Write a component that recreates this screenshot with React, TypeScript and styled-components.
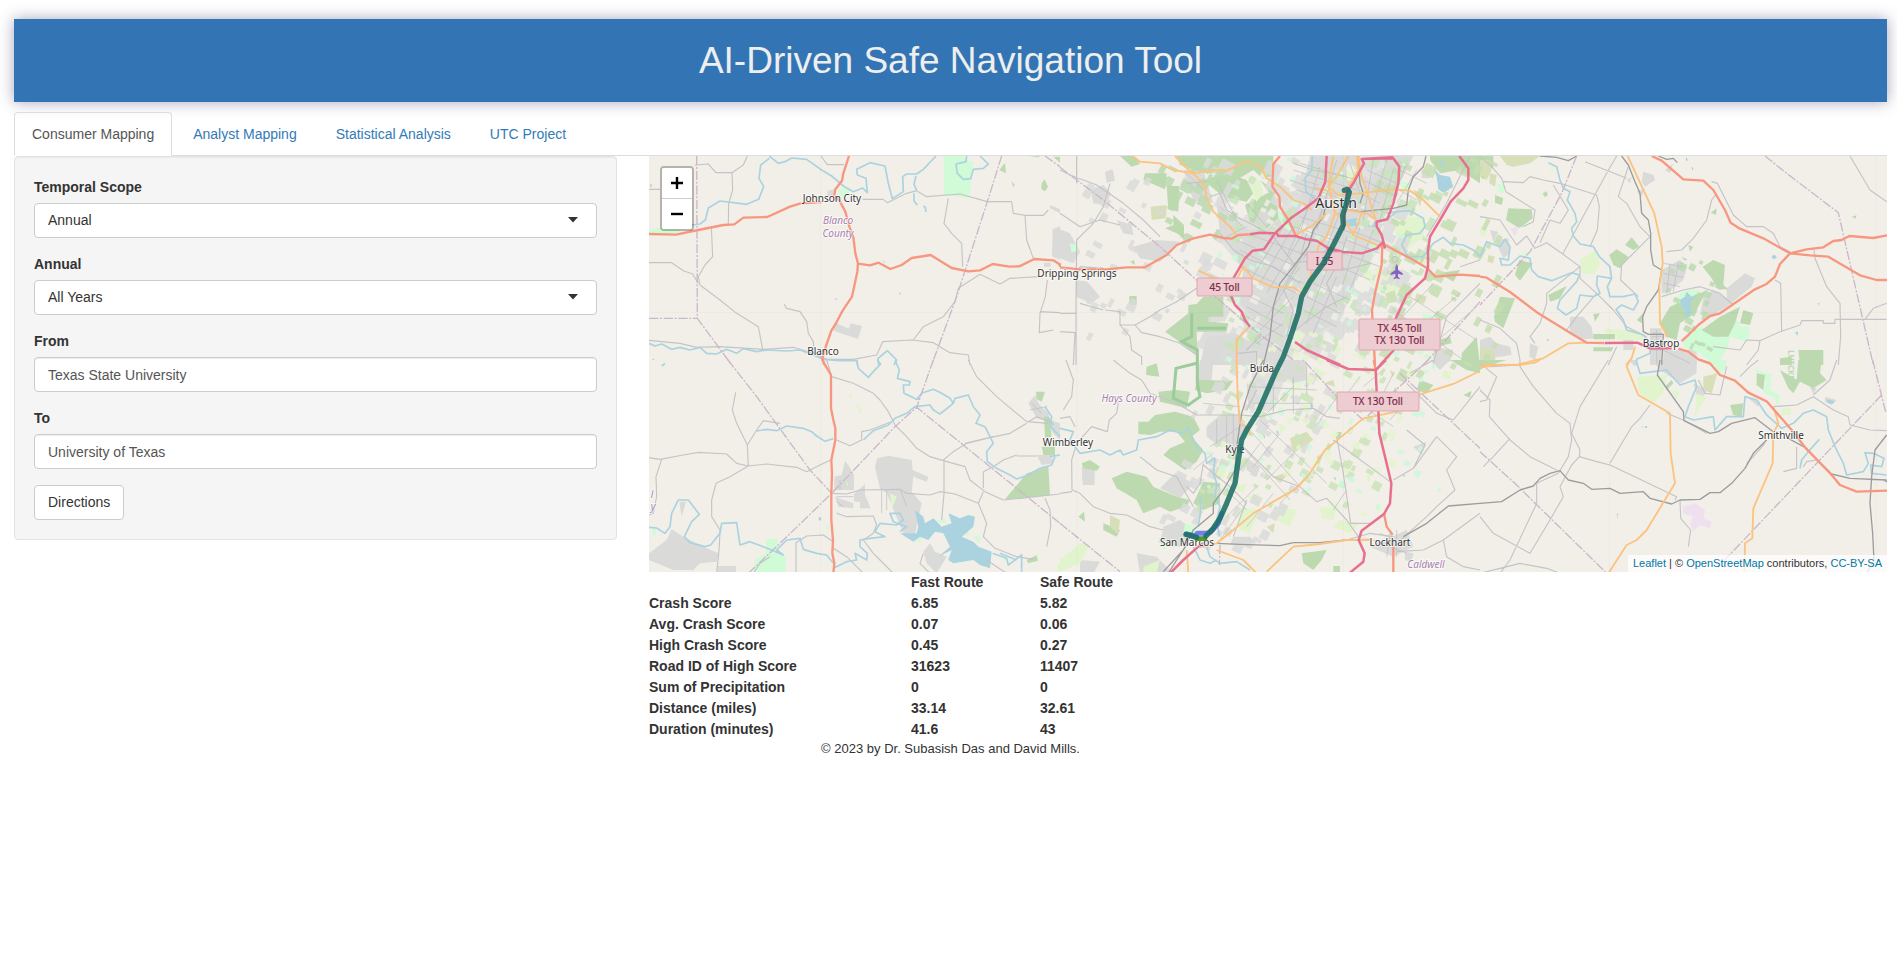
import React from "react";
import styled, { createGlobalStyle } from "styled-components";

const GlobalStyle = createGlobalStyle`
  *, *::before, *::after { box-sizing: border-box; }
  body {
    margin: 0;
    background: #fff;
    color: #333;
    font-family: "Liberation Sans", Arial, sans-serif;
    font-size: 14px;
    line-height: 21px;
  }
  a { color: #337ab7; text-decoration: none; }
`;

const Page = styled.div`
  padding: 19px 10px 0 14px;
`;

const Banner = styled.header`
  display: flex;
  align-items: center;
  justify-content: center;
  height: 83px;
  background: #3375b4;
  box-shadow: 0 0 14px rgba(60, 50, 100, 0.45);
`;

const Title = styled.h1`
  margin: 0;
  color: #eee;
  font-size: 37px;
  font-weight: 400;
  line-height: 40px;
`;

const Tabs = styled.nav`
  display: flex;
  gap: 3px;
  margin-top: 10px;
  border-bottom: 1px solid #ddd;
`;

const Tab = styled.a<{ $active?: boolean }>`
  margin-bottom: -1px;
  padding: 11px 17px 10px;
  border: 1px solid ${(p) => (p.$active ? "#ddd" : "transparent")};
  border-bottom-color: ${(p) => (p.$active ? "#fff" : "transparent")};
  border-radius: 4px 4px 0 0;
  color: ${(p) => (p.$active ? "#555" : "#337ab7")};
`;

const Columns = styled.main`
  display: grid;
  grid-template-columns: 1fr 2fr;
  align-items: start;
  margin: 0 -16px;
`;

const Column = styled.div`
  min-width: 0;
  padding: 0 16px;
`;

const Well = styled.form`
  display: flex;
  flex-direction: column;
  gap: 16px;
  padding: 20px 19px 19px;
  border: 1px solid #e3e3e3;
  border-radius: 4px;
  background: #f5f5f5;
  box-shadow: inset 0 1px 1px rgba(0, 0, 0, 0.05);
`;

const Field = styled.div`
  display: flex;
  flex-direction: column;
  gap: 5px;
`;

const Label = styled.label`
  font-weight: 700;
`;

const controlStyle = `
  width: 100%;
  height: 35px;
  padding: 0 13px;
  border: 1px solid #ccc;
  border-radius: 4px;
  background: #fff;
  font: inherit;
`;

const TextInput = styled.input`
  ${controlStyle}
  color: #555;
  box-shadow: inset 0 1px 1px rgba(0, 0, 0, 0.075);
`;

const SelectBox = styled.div`
  position: relative;
`;

const Select = styled.select`
  ${controlStyle}
  display: block;
  appearance: none;
  color: #333;
`;

const Caret = styled.svg`
  position: absolute;
  top: 14px;
  right: 19px;
  pointer-events: none;
`;

const DirectionsButton = styled.button`
  align-self: flex-start;
  height: 35px;
  padding: 0 13px;
  border: 1px solid #ccc;
  border-radius: 4px;
  background: #fff;
  color: #333;
  font: inherit;
`;

const MapFrame = styled.section`
  position: relative;
  height: 416px;
  overflow: hidden;
  background: #f2efe9;
`;

const MapDrawing = styled.svg`
  display: block;
  width: 100%;
  height: 100%;
  font-family: "Noto Sans", sans-serif;
`;

const ZoomBar = styled.div`
  position: absolute;
  top: 10px;
  left: 11px;
  border: 2px solid rgba(0, 0, 0, 0.25);
  border-radius: 4px;
  background-clip: padding-box;
`;

const ZoomButton = styled.button`
  display: grid;
  place-items: center;
  width: 30px;
  height: 30px;
  padding: 0;
  border: 0;
  background: #fff;
  &:first-child {
    height: 31px;
    border-bottom: 1px solid #ccc;
    border-radius: 2px 2px 0 0;
  }
  &:last-child {
    border-radius: 0 0 2px 2px;
  }
`;

const Attribution = styled.div`
  position: absolute;
  right: 0;
  bottom: 0;
  padding: 0 5px;
  background: rgba(255, 255, 255, 0.75);
  font-size: 11px;
  line-height: 17px;
  a { color: #0078a8; }
`;

const ScoreTable = styled.table`
  border-collapse: collapse;
  table-layout: fixed;
  font-weight: 700;
  th, td {
    width: 129px;
    padding: 0;
    text-align: left;
  }
  th:first-child, td:first-child { width: 262px; }
`;

const Footer = styled.footer`
  margin-top: -2px;
  text-align: center;
  font-size: 13px;
`;

/* ---------- map data, one group per map tile, in thirds of a pixel ---------- */

type Kind =
  | "gray" | "wood" | "park" | "olive" | "pale" | "lake" | "pink"
  | "minor" | "street" | "river" | "rail" | "bound" | "primary" | "trunk" | "motor";

const fills: Partial<Record<Kind, string>> = {
  gray: "#dadad9", wood: "#bcd9b0", park: "#d1fad6", olive: "#d6dfb8",
  pale: "#e2f4cd", lake: "#aad3df", pink: "#eee0ee",
};

const lines: Partial<Record<Kind, [string, number]>> = {
  minor: ["#c4c4c7", 3.4], street: ["#bfbfc3", 2.2], river: ["#aad3df", 5],
  rail: ["#9c9c9c", 4], bound: ["#cbb7cb", 4], primary: ["#fbc37e", 5.5],
  trunk: ["#f8977f", 7], motor: ["#e8708f", 7.5],
};

const order: Kind[] = [
  "gray", "park", "wood", "olive", "pale", "pink", "lake", "street", "minor",
  "river", "bound", "rail", "primary", "trunk", "motor",
];

type Tile = { x: number; y: number; paths: Partial<Record<Kind, string>> };

const tiles: Tile[] = [
  {
    x: 0, y: 0,
    paths: {
      park: "M911 18H975L985 34 1001 36 986 145 912 135ZM595 120L625 110 630 135 600 138Z M27 240L60 232 130 240 100 252 27 252Z",
      wood: "M1078 60L1095 38 1098 70ZM1205 100L1214 88 1224 110 1215 124 1204 118ZM1168 18H1200L1195 22ZM1240 20H1260V38ZM1114 94L1124 104 1120 112ZM28 104L36 102 34 114Z",
      gray: "M1238 238L1260 228V330L1236 318ZM583 516L626 536 632 520 666 528 654 567 580 542ZM1230 165L1260 178V190L1230 175ZM1212 338H1232V350H1212ZM562 122L585 118 580 140 562 138Z",
      lake: "M1164 282l5 4-3 5zM584 444l8 2-4 4zM777 430l6-4-3 10zM726 330l6 4 4 8z",
      river: "M388 18L415 40 435 35 455 24 500 28 545 60 575 78 610 108 640 125 668 114 682 128 678 85 652 75 650 58 690 38 735 48 745 100 757 146 790 125 788 80 800 72 830 72 850 58 888 18 M388 25L362 45 357 85 371 110 356 148 320 163 280 158 240 153 205 174 196 210 180 222 155 225 M828 78l-6 25 8 18M822 130l0 22 10 14M850 168l6 4 2 14 M980 18L978 35 948 42 952 70 970 88 992 86 1000 58 1030 55 1045 42 1020 18 M27 580L45 588 65 582 95 598 120 592 150 600 180 592 200 610 230 612 260 598 290 610 310 596 350 605 380 600 440 603 480 600 520 615 550 628 600 632 650 632 652 645 M716 645L714 625 730 612 742 602 770 630 762 645 M75 640l-10 8",
      minor: "M165 45L205 42 228 68 276 68 310 45 322 18M276 68L278 120 266 160 265 222M27 118L60 118 M214 232L218 320 195 345 175 380 180 405 240 450 290 490 355 530 368 598M27 338L95 338 130 362 158 372 175 400M543 18L562 44 612 44 M668 148L730 148 742 158 800 130 830 122 860 140 960 132 1042 155 1115 155 1120 190 1155 196 1210 196 1225 180M925 145L912 220 935 250 965 280 968 350M1155 196L1160 270 1180 325M1020 373L1080 402 1110 385 1200 380M1020 373L955 415 945 455 910 500 850 530 820 570M1222 390L1216 440 1200 490 1198 548 1240 540M1200 485L1260 488M27 571L120 580 170 592 240 590 370 598 460 592 520 610 560 628 640 628 710 615 728 575 815 570 880 578 930 608 985 615 990 645M432 462L440 475 480 485 500 515 505 550 520 575 522 600",
      bound: "M170 18L172 505 275 645M27 505H172M1085 18L1042 155 950 440 875 645M1215 18L1260 50",
      trunk: "M627 18L610 70 606 92 586 118 583 135 600 155 616 185 628 230 640 262 646 310 654 340 652 365 636 440 606 485 588 520 574 542 558 588 547 625 553 645M27 252L108 254 160 243 250 225 283 223 310 203 382 201 450 170 482 160 545 156M654 341L690 346 716 338 751 357 785 345 815 324 872 315 935 354 985 364 1020 361 1058 342 1108 350 1138 349 1183 327 1240 331 1262 345",
    },
  },
  {
    x: 1260, y: 0,
    paths: {
      gray: "M0 238L30 250 60 305 40 340 0 325ZM92 118L130 105 152 128 140 165 100 160ZM48 390L82 395 120 440 95 460 48 440ZM135 65L158 58 165 92 140 98ZM170 210L215 225 220 255 190 250ZM220 290L290 270 360 275 300 335 240 325ZM370 60L430 60 460 160 400 150ZM350 18H420L410 40ZM440 560L530 550 590 590 590 645H420ZM470 160L560 240 620 240 720 150 750 18H900L900 120 1000 18H1060L1010 120 960 200 960 300 900 330 880 420 830 520 750 560 700 500 650 645H560L590 520 540 460 550 360 520 300 480 250ZM1085 60H1110V85H1085ZM1040 540L1075 510 1100 560 1060 590ZM1120 590L1180 600 1170 635 1120 630Z",
      wood: "M255 70L320 70 315 118 250 90ZM320 108L358 108 355 185 325 178ZM340 195L372 225 372 265 350 250 315 235 340 225ZM180 18L220 18 240 42 215 50ZM350 18H640L640 75 610 88 580 60 530 90 480 70 440 70 400 60 360 45ZM430 90L500 70 560 90 580 130 560 155 490 140ZM555 165L630 125 650 150 655 205 620 235 570 215ZM600 90L655 130 640 145ZM1110 18H1260V100L1200 60 1140 70 1110 30ZM1135 370L1200 360 1180 395ZM1205 610L1250 560 1260 645H1205ZM575 530L605 535 600 600 575 590ZM208 438H230V464H208ZM210 335L222 330 225 345ZM1128 572L1170 560 1175 580 1130 590Z",
      olive: "M272 170L320 165 318 205 275 210ZM975 430L1005 420 1012 455 985 460ZM1060 120L1090 130 1080 170ZM1140 85L1170 105 1165 125ZM790 570l20 8-4 24-20-10zM1080 515L1110 510 1125 535 1090 545ZM1070 430l30 10-8 22-28-10z",
      pale: "M560 75L600 90 610 130 590 155 575 120ZM1000 200L1095 200 1090 260 1040 300 1000 240ZM900 370L960 350 1000 380 1030 420 960 425ZM780 110L810 118 790 140ZM860 50L900 60 890 100 862 90ZM640 400L700 395 690 430ZM1060 320L1100 330 1095 345Z",
      park: "M640 170L680 210 700 250 670 230ZM500 180L530 200 520 225ZM690 370L720 378 715 400ZM590 430L625 420 620 445ZM820 60L850 65 845 90ZM1010 90L1050 100 1040 130ZM920 520L950 530 942 548ZM780 360L800 366 790 380ZM30 280l20 4 4 20-20 2zM1090 490l30 8-5 14-28-8z",
      lake: "M1120 55L1140 75 1170 80 1180 110 1150 128 1135 118 1130 80ZM1140 30l10 5-4 20zM850 210L890 205 950 215 945 232 900 228 860 228Z",
      river: "M757 18L755 60 735 85 738 125 770 150M945 215L985 205 1010 185 1050 182 1090 205 1095 230 1080 250 1040 255 1025 285 1045 320 1090 320 1120 280 1150 262 1170 280 1210 285 1240 300 1260 320M980 190L1010 185",
      street: "M600 400l100 -170M560 410L670 230M620 430l120 -200M650 440l115 -180M530 270l180 80M540 300l190 100M560 250l190 70M540 350l170 80M700 60l190 60M690 90l190 70M720 40l170 50M720 200l160 50M700 230l150 50M760 140l-80 180M800 140L730 330M780 50L720 250M830 30L770 240M860 130L790 320M900 230L850 400M940 240L870 420M870 240l100 40M860 270l100 40M850 310l110 40M840 350l90 40M760 400l110 50M740 440l100 50M730 480l100 50M830 380l-70 170M800 360L740 520M900 130l60 30M920 60l90 40M910 90l100 50M940 30l-30 180M980 30L930 200M1000 60L960 210M760 110l120 40M620 500L720 350M600 540l100 -100M590 580l80 -60M560 470l110 60M560 500l110 60M550 430l120 60M1010 520L1120 400M1050 560L1200 430M1000 480l210 150M1050 440l200 130M1100 600L1250 470M480 170l70 60M500 260l60 -30M470 90l60 120M560 160l60 70M380 70l60 60M710 120l60 20M725 90l50 15M870 40l30 90M1040 40l-60 150M1070 60l-60 100M1020 60l80 40M1000 110l70 40",
      minor: "M0 60L30 75 110 105 190 160 250 210 300 260M50 18V100M150 100L130 170 100 220 50 270 48 460 48 645M0 190L60 230 120 210 180 225M0 490L50 490 M135 480L180 485V525H225L245 548 300 560 360 580 410 615M410 415L350 455 300 480 270 500 225 525M180 525L210 560 215 600 245 620 245 645M60 460L130 480M450 140L480 130 500 180 530 200 580 225 600 235M380 100L440 95 M50 385L60 350 130 355M680 560L760 500 800 470 860 440M0 545L45 548 40 645M1260 400L1160 500 1120 640M1260 330L1200 350M560 600L600 560M1230 18L1160 160 1100 260M530 610L590 605V645M580 225L640 260 700 340 760 330 850 360 930 340M700 40L760 60 860 80M740 250L720 330 670 420 700 480 680 560M860 260L840 330 800 400 830 470M480 250L520 300 570 330 640 350 720 400",
      bound: "M0 52L130 150 300 290 420 400 570 530 700 630M1260 455L1140 590 1090 645",
      rail: "M745 290L700 350 660 400 640 470 630 560 610 645M745 290L760 240 790 200 800 150M1098 18L1090 50 1060 80 1045 120 1040 165 1000 175 900 185 870 180M895 18L900 100 910 130 900 160",
      primary: "M218 18L240 35 300 40 340 60 400 70 435 110 440 145 460 185 510 230 530 255M345 18L375 50 400 70M400 70L460 60 500 62 560 34 600 48 620 85 660 110 700 150 735 162 755 180M865 18L830 80 805 110 835 135 900 130 1000 118 1050 122 1090 150 1140 200M800 120L765 115M895 20L905 80 920 120 940 190 950 215M820 180L860 220 880 255 940 280 975 295M905 190L880 255M860 180L920 190 950 210M825 190L800 260 775 290 740 420 M800 190L760 225 700 260M415 362L520 410 550 350 580 385 640 412 700 412 728 432 740 425M568 530L530 570V645M820 18l-15 90 20 80M890 18L895 60 860 120",
      trunk: "M660 18L640 42 637 110 658 140 660 170 688 215 708 258M0 352L60 358 140 358 200 352 255 352 320 315 350 285 400 265 450 254 490 264 515 266 535 255 570 253M975 285L1060 330 1102 355 1126 380 1200 374 1260 378M967 285L965 345 945 430 936 480 945 645M0 350L-2 340",
      motor: "M800 18L796 95 775 145 740 172 692 205 645 250 612 298 578 302 555 325 520 385M512 435L525 465 545 485 555 510 570 530M570 253L600 248 650 250 655 258 706 258 740 268 770 272 800 292 850 306 905 310 950 295 970 275 965 255 950 230 950 215 982 208 1000 160 1015 100 1018 50 1000 25 905 27 912 40 880 100 862 125M905 27L1000 22M1198 18L1225 55 1225 90 1210 115 1172 155 1140 210 1110 260 1104 300 1104 350 1095 385 1040 435 1005 510M1002 600L960 645M705 576L740 600 840 645M850 306L800 298M970 275L975 295M860 125L850 240",
    },
  },
  {
    x: 2520, y: 0,
    paths: {
      wood: "M85 175L155 178 158 205 118 235 78 210ZM45 135L70 145 65 165 45 158ZM60 440L105 445 70 535 45 515 42 500ZM118 330L158 340 120 392 105 375ZM435 285L455 262 478 290 460 300ZM388 315L410 298 445 320 420 355 400 345ZM668 350L700 330 735 345 730 405 745 418H715L695 385ZM540 520L570 470 640 440 680 420 650 480 630 500 600 520 590 570 560 560ZM665 540L720 500 780 470 765 520 745 560 700 560ZM790 480L820 490 810 525 780 520ZM625 285L640 290 630 305ZM603 320L622 328 615 332ZM340 492L360 490 345 515ZM340 592H400L395 604H340ZM340 552H405V568H340ZM205 435L260 408 240 445 210 455ZM692 188L710 175 708 195ZM955 600H1030V645H960ZM900 625L935 620V645H900ZM1115 200l15 -4 -3 10zM0 18H40V55L0 50ZM188 130l12-6 4 12-10 5zM470 510L490 490 485 520Z",
      olive: "M0 30L30 30 35 60 20 90 0 80ZM25 315L45 320 38 340 22 335ZM60 18H180L150 40 100 50 80 45ZM0 590L40 600 50 645H0ZM30 70L50 75 45 110 28 100Z",
      park: "M610 570L660 530 700 550 740 560 760 520 765 500 785 530 810 530 800 575 750 560 740 600 710 645H700L660 610 610 590ZM580 465L600 430 640 415 660 430 630 520 605 500ZM50 100L72 105 75 130 55 125ZM125 305L145 305 140 325Z",
      pale: "M300 330L345 300 360 340 345 375 305 370ZM0 235L22 245 15 260 0 255ZM640 420L660 420 655 435ZM410 550H490V570H410ZM210 55l12 5-6 8zM375 535l90 8v10l-90-4z",
      gray: "M270 500L310 500 335 530 340 565 300 570 270 545ZM490 65L520 75 525 90 495 110 485 95ZM470 125L495 115 485 140ZM50 270L85 265 90 310 70 325 58 300ZM30 240L55 245 40 275ZM545 360L600 330 622 350 610 390 560 430 545 430ZM555 60l25-20-10 30zM670 440L700 420 740 445 740 415 795 370 825 385 815 410 740 470 700 495 660 495ZM0 570L30 560 50 580 90 590 95 615 30 625 0 600ZM430 540H460V600H430ZM510 535H545V645H510ZM550 600L650 600 650 645H550ZM150 580L175 590 165 630 148 620ZM440 90L455 80 450 100ZM1010 460l10 -2v10z",
      pink: "M90 235L118 230 105 260Z",
      lake: "M600 450L615 440 620 425 635 440 655 430 630 460 635 485 620 505 605 480ZM875 318l10-4 6 10-12 4zM618 20l6 10-6 4zM635 50l6 4-4 8zM198 568l10 0-4 6zM945 548l8-4 2 14z",
      river: "M205 38L230 50 240 90 250 115 270 125 262 150 285 190 290 215 275 235 280 258 300 282 340 290 358 320 390 350 395 385 352 378 350 405 360 430 340 440 300 435 290 475 258 495 232 475 240 450 290 395 298 375 275 368 215 392 175 380 155 360 150 325 120 318 90 345 65 345 60 325 85 330 90 290 75 268 60 290 20 275 0 320M395 385L382 410 390 440 430 440 465 432 475 455 460 480 425 465 408 478 430 510 440 540 490 555 512 580 510 610 470 628 468 645",
      minor: "M0 20L35 50 65 85 78 125 165 180 160 215 128 230M70 95L130 98 150 80 190 90 240 100 350 135 358 170 352 240 330 290M0 200L60 210 110 285 140 258 165 295 200 278 245 310 300 350 300 385 350 430 400 480 440 530 500 560M410 18L380 70 248 312M315 35L440 85M220 105L265 180 240 220 210 210 180 278M445 50L415 140 440 160 480 230 510 260 425 345 422 390 475 440M560 305L605 300 640 265 680 210 695 150 710 130M695 95L712 100 760 195 800 230 850 230 880 250 900 290 930 305M885 390L902 400 905 545M1002 300L1005 325 1040 410 1080 460 1082 560 1075 645M700 590L780 600 800 570 840 572 900 545 960 525 965 512H1030V520H1065V508H1220M1155 508L1180 475 1220 460M545 440L610 420 660 410 720 430 760 465M350 430L290 500 260 540M0 510L60 535 110 580 120 630M1110 18L1170 120 1220 155M385 645L410 590M300 350L200 430 200 460 180 520 150 560 165 580M840 572L835 600 800 645",
      street: "M550 340l60 10M550 370l60 12M550 400l50 10M570 340l-10 90M595 335l-15 90M550 600l80 40M530 540v100M515 560h30M515 550h34M515 580h34M515 600h34",
      rail: "M180 18L230 22 265 32 290 18M425 18L445 45 465 95 480 130 485 190 505 210 512 250 512 300 520 345 545 360 535 420 500 470 488 500 490 545 505 553H550L545 645M535 18L560 28 580 25 592 38",
      bound: "M290 18L245 130 150 305 0 465M855 18L920 70 1075 188 1180 645",
      primary: "M443 18L523 190 545 290 548 340 538 410 540 520 555 545 560 560M0 645H110L160 632 190 625 265 580 320 578M465 590L455 625 438 645",
      trunk: "M515 18L545 32 610 88 670 92 700 120 735 180 752 218 780 236 850 265 930 310 980 298 1030 292 1060 273 1085 270 1108 258 1180 264 1222 256M930 310L990 316 1045 320 1140 376 1190 390 1222 390M930 310L900 342 885 380 860 402 825 418 720 490 690 498 655 525 620 560 605 573M0 380L20 383 90 426 175 490 270 548 320 578 372 579M595 596L625 605 655 628 690 640",
      motor: "M374 579L472 578 510 595 575 595",
    },
  },
  {
    x: 0, y: 630,
    paths: {
      gray: "M705 320L712 295 745 287 815 300 818 330 865 350 860 365 820 350 815 395 845 430 820 545 790 520 740 400 720 385ZM583 350L605 345 615 303 628 320 642 345V390H583ZM585 410L640 430V445L595 440ZM642 402L675 372 675 405 692 445H660V425H642ZM27 580L80 540 95 507 130 530 190 560 235 580 230 605 180 610 160 630H100L27 600ZM118 425H138L125 470ZM232 618H288V640H232ZM1165 130L1185 105 1195 130 1225 160 1230 185 1190 175ZM1190 285H1235L1240 310 1205 315ZM850 575L870 550 885 575 920 590 890 640 860 610ZM1230 180L1260 190V240L1235 215Z",
      wood: "M1095 418L1160 340 1225 320 1230 405 1140 415ZM1188 95H1215L1205 125 1190 118ZM1212 170H1228L1235 230 1215 235ZM1205 260H1245V285H1210ZM1160 600l30-14 4 16-30 8z",
      park: "M378 537H412L415 570 437 590V640H340L345 600 378 580ZM37 505H48V525H37ZM835 500L850 510 840 545 825 540ZM880 485L915 475 918 490ZM960 520L985 485 998 490 985 525 965 530ZM1000 530L1022 525 1018 550ZM930 590L955 580 945 605ZM1085 590l20 0-8 14zM555 505l10-8 4 14zM1212 130l12 6-4 12zM27 630l8 2v6z",
      pale: "M652 465L680 465 675 472ZM625 100l14 10-8 8zM645 130l20 20-5 14zM750 400L770 410 755 450ZM1252 610h8v25h-8zM617 362l8 14-4 2z",
      lake: "M825 450L850 470 855 490 880 475 905 500 935 490 925 460 960 475 985 465 1005 470 1000 500 965 530 1000 545 1015 560 1055 575 1050 625 1020 615 1000 600 940 610 925 600 935 570 895 590 930 560 910 520 885 515 865 540 840 530 820 545 780 520 830 520 835 500ZM535 473l6-3 3 10-6 2z",
      river: "M650 0L655 25 685 52 700 35 722 12 712 0M765 0L778 30 772 55 810 65 808 75 790 75 792 100 830 118 845 100 880 88 905 100 930 115 940 130 900 162 880 150 870 135 825 140 800 160 765 175 745 195 700 212 670 240M830 118L840 115M940 130L945 115 985 105 1000 140 1020 165 1008 190 1035 200 1060 250 1040 275 1042 305 1070 325 1110 345 1130 357 1165 345 1200 325 1235 315 1245 290M1260 285L1230 290M350 213L380 208 410 212 440 198 490 205 515 215 530 228 555 244 580 236M27 502L50 504 75 520 90 500 95 460 115 420 145 420 178 463 155 485 133 530 150 548 195 560 212 555 240 520 245 490 290 488 300 555 330 545 370 560 400 572 430 585 410 570 440 540 480 535 490 568 530 580 560 585 580 610M580 625L620 605 650 600 645 580 680 600 682 580 660 560 660 540 690 535 735 530 705 515 720 490 770 495 790 480 780 460 750 460 760 485 800 500 780 515 M1058 580L1100 595 1105 615 1145 585 1145 635M1080 580l50 20M1215 140L1235 170 1232 200 1260 230M40 0v-4M1225 175L1240 195",
      minor: "M560 0L575 50 640 70 700 100 720 120 745 155 765 195 800 230 830 265 870 290 910 302 975 320 990 360 1035 395 1090 420 1140 415 1260 402M985 0L1010 50 1070 110 1160 185 1225 190M287 97L277 150 290 190 322 255 325 318M322 255L350 210 370 182 420 190M27 293L60 298 130 285 175 277 260 282 290 310 325 318 380 312 470 322 500 335 540 315 572 300M65 298L48 350 50 410 40 460 27 465M325 318L270 350 228 370 215 420 215 470 240 510 238 560 230 640M575 400L620 402 660 390 780 388 800 400 870 405 900 395 945 402 1015 430 1040 490 1030 530 1065 565 1130 590 1180 598M912 305V400L905 480M1030 395L1015 430M910 300L940 275 980 250 1040 235 1110 220 1160 190M975 250L1060 230M590 460L620 470 700 468 710 495 700 520 670 540 700 580 720 600 760 640M468 640V548L500 528 550 525 580 545M580 565L620 590 670 640M850 580L840 610 870 640M1030 335L1030 385M1090 300L1060 320 1030 335M1130 285L1090 300M1165 185L1190 170 1240 190 M1215 415L1230 450 1232 500 1220 560M750 187L690 210 665 215 665 240 630 257 590 240M1190 288H1130M390 590L360 610 340 640M1040 600L1100 640",
      street: "M725 385v75M740 390v60M600 360l0 30M590 410l50 0M590 425l20 15M1175 130l30 30M1170 150l50 -10M780 388l20 50",
      bound: "M264 0L350 110 510 330 575 400M325 640L420 550 575 400 765 200 830 142 1260 490M880 0L830 142",
      trunk: "M547 0L558 20 573 45V145L580 180 586 205 586 240 574 300 576 340 574 400 574 480 579 540 577 580 583 610 580 640",
    },
  },
  {
    x: 1260, y: 630,
    paths: {
      gray: "M420 0L460 0 455 60 430 90 410 60ZM440 200L480 165 540 165 560 200 530 260 480 260 440 230ZM560 70L590 80 580 150 565 145ZM640 0H740V60L700 70 640 60ZM300 385L345 340 400 370 360 415ZM65 320L105 330 103 375H68ZM555 290L600 320 590 350 560 330ZM520 530L570 530 590 550 510 555ZM230 580L290 590 340 640H240ZM930 560L1040 510 1060 560 1000 590ZM1060 260L1100 245 1085 285ZM60 600L120 605 100 640H60ZM1035 575l25 5-5 25-20-5zM310 500L360 480 400 510 380 560 300 560ZM1110 0h60l-30 30z",
      wood: "M235 185H265L285 165 345 155 400 170 420 210 395 230 430 270 410 305 375 330 310 285 330 265 375 245 350 215 300 215 270 225 235 222ZM155 355L200 335 260 350 280 380 350 410 390 420 380 440 330 455 300 440 250 460 230 420 170 385ZM260 20L290 10 298 50 258 45ZM430 365L480 370 480 430 430 450 400 430ZM65 310L90 300 120 320 110 332 70 325ZM410 60L520 62 500 90 440 100 405 90ZM1080 60L1120 75 1100 100 1070 90ZM1170 0H1260V40L1220 30ZM725 580L800 570 785 600 760 630 730 610ZM55 470L72 455 75 485ZM130 490L180 510 170 530 130 510ZM295 95L350 90 390 95 380 145 300 125ZM1210 105l25-12-5 20zM830 215l15 2-5 20-15-5zM820 618l20 0v20h-20z",
      olive: "M690 235L740 215 760 240 700 280ZM150 465L180 480 175 525 150 500ZM770 290L790 280 775 320ZM640 350L690 335 660 370ZM1005 130l25 10-5 25-20-5zM990 30l15 8-8 14zM620 500L645 490 640 520ZM790 70L820 60 825 80Z",
      pale: "M0 600L60 550 90 555 60 610 0 635ZM760 20L800 40 770 65ZM520 380L560 370 550 400ZM660 440L710 450 690 500 650 480ZM840 480L900 490 870 520 820 500ZM560 410L600 400 600 440ZM780 440L830 445 820 480 785 475ZM720 130L760 140 740 165ZM650 190L680 200 665 220ZM530 440L600 450 570 520 540 510ZM250 620L300 600 290 640H250ZM920 345l10 0v20h-10zM1150 30l25 10-8 20-20-8z",
      park: "M375 490L410 500 400 530 370 520ZM590 220L610 225 600 245ZM500 290L520 300 510 320ZM800 130l20 10-10 14zM670 390l14 8-6 10zM945 435l12-6 6 18-14 6zM290 530L330 550 310 570ZM480 440l20 10-6 14z",
      lake: "M820 350l8 4-2 8zM750 130l10 6-6 14zM910 230l8 4-4 6zM888 250l8 4-4 6zM1028 345l8 0-4 6zM650 210l6 6-6 14zM610 225l6 4-4 8zM695 60l8 4-4 10z",
      river: "M0 205L40 215 30 240 60 280 120 270 150 285 180 270 190 285 230 270 235 240 290 230 330 210 365 220 385 205 410 260 435 280 440 310 465 295 460 340 470 370 465 410 480 440 470 480M400 560L420 600 450 610 470 600 M440 560L450 590 480 610 530 605 570 630M420 410L422 450 415 500M470 480L478 530",
      street: "M570 80l200 10M580 130h180M640 60v100M700 50v110M620 160L700 80M740 20v80M560 200l160 180M600 180l200 190M530 240l160 180M600 250L540 330M660 220L580 320M700 280L620 360M750 340L660 430M500 390l60 60M590 380L500 470M560 430L480 540M640 400L560 500M840 100l-60 80M900 50l-60 80M880 120l120 80M430 130l110 10M450 260l90 -60M470 180v70M500 170v80M520 160v100M910 80l60 -50M1000 40l-40 80M1050 110l-60 70M940 540l100 40M960 520l80 40M980 590l10 -70M1010 590v-80M400 330l60 -50M820 450l40 -60",
      minor: "M175 125L170 160 148 180 142 215 95 200 50 250 35 300 36 390 60 400 100 440 150 460 200 465 270 500 310 510 M0 400L36 395M18 0L40 60 35 110 10 150M160 0L210 40 245 60 270 100 350 130 410 165 540 165 600 170 680 150 760 145 800 170 840 175M0 175L30 170 45 200M540 250L640 350 720 380 770 425 800 415 860 480 895 530M830 230L850 340 872 490 930 490M820 240L990 365M1130 230L1060 325 1000 360M1130 230L1190 290 1160 330 1185 390 1130 440 1100 470 1000 560 1000 540M1010 575L1090 570 1150 540 1260 460M1040 70L1130 160 1180 180 1260 80M1040 210L1095 255 1060 325M1150 540L1160 590 1210 620 1260 630M860 540L930 520 1000 530M240 290L290 330 350 350 400 440M430 315L510 380 560 430M590 90L560 150M430 310L420 370 400 400 380 380M560 420L520 530M1120 0L1050 40",
      rail: "M610 0L570 80 545 160 530 260 525 330 490 390 460 430 460 460 400 510 370 570 310 635M470 550L540 553 660 557 700 548 780 548 860 540 930 538M1030 530L1100 490 1165 438 1260 430M380 555L350 600 325 640",
      bound: "M0 490L180 635M1105 0L910 180 830 110 730 0M1020 40L1260 265M480 555L478 615",
      primary: "M530 0L533 110 540 190 565 205 570 225M1260 33L1180 72 1075 105M1010 155L910 175 820 250 795 270 750 340 710 385 640 425 580 460 520 510 470 550M470 570L550 600 590 640M620 635L700 560 780 552 860 540 930 540M380 570L385 640M470 550L440 555",
      trunk: "M941 0L947 30M972 460L980 500 998 525M1000 560V640M440 555L420 560",
      motor: "M800 0L865 27 947 30 978 0M947 30L950 95M955 152L958 220 975 290 994 370 990 430 972 462 905 512 896 540 914 580 910 605 870 638M415 560L370 600 330 640M430 550L415 560",
    },
  },
  {
    x: 2520, y: 630,
    paths: {
      gray: "M515 0H650V40L600 70 540 30ZM640 70L680 90 670 110 650 105ZM990 80L1010 85 1000 105ZM1035 110L1070 120 1055 135 1035 125ZM0 0H20v8zM800 110L840 125 835 140ZM445 0h20v20z",
      wood: "M955 0H1025L1020 40 1040 60 1000 85 950 60ZM900 30L960 65 940 100 925 85ZM830 40L855 45 850 90 830 75ZM750 135L790 130 785 170 760 165ZM555 80L575 60 580 70 560 90ZM15 20L80 0H0v30z",
      park: "M700 0H740L735 30 710 40ZM820 25L875 45 870 90 900 105 895 140 880 110 850 100 860 60Z",
      pale: "M470 50L560 45 550 100 520 130 480 100ZM645 100L680 110 640 175 650 130ZM905 145L935 145 930 165 905 165ZM570 90L600 95 590 120Z",
      olive: "M670 50L712 40 695 100 670 90ZM410 460l6 0-4 20z",
      pink: "M610 440L645 430 675 450 670 475 695 485 690 505 660 495 640 515 630 490 640 470 608 460Z",
      lake: "M484 200l4-2 2 6zM495 198h6v6h-6zM1040 118l25 6-8 8-14-4z",
      river: "M468 0L480 40 520 35 560 30 600 75 645 60 650 80 625 140 615 170 640 180 700 170 705 210 740 170 790 170 795 110 830 120 860 165 905 205 940 190 970 160 1000 150 1040 170 1045 210 1065 260 1090 310 1100 345 1150 335 1165 310 1155 278 1180 280 1212 295 1205 320 1172 315 1175 340 1220 345M960 325L965 300 985 275 1018 238",
      minor: "M120 0V20L160 80 230 160 270 190 275 240 265 290 235 340 170 370M385 0L300 140 275 220 300 270 298 290 350 305 390 315 590 410 585 420M0 90L30 120 28 170 90 240 150 290 230 330M0 10L50 50 20 120 0 125M90 235L40 290 10 320M510 135L480 175 455 200 390 310M298 290L275 315 240 380 250 410 210 480 150 580 40 520 0 470M170 370V430L90 600 60 640M0 640L60 625 120 610 200 625 240 640M600 420L602 475 632 510 625 560M880 140L950 135 1000 110 1060 150 1105 170 1110 195 1170 210 1220 212M1070 0L1050 60 1000 105M655 60L675 100 720 105 740 20M910 335L950 325V260M835 0L810 20 780 50M560 160L610 180 680 220M970 320L980 305 1010 300M855 250L820 290 800 310M120 15L30 20",
      rail: "M540 0L532 45 610 155 612 182 650 200 690 220 715 215 755 190 825 173 860 200 880 215M860 240L820 280 795 325 755 370 720 398 690 398 660 418 600 420 575 432 510 415 490 395 420 400 390 385 335 388 310 370 265 360 240 332 210 340 180 355 160 378 120 390 65 425 0 430M925 235L975 262 1055 342 1110 355 1220 360M1220 225L1185 270 1175 350 1170 430 1178 520 1182 600 1160 640M1210 360L1235 372",
      bound: "M0 275L110 375 380 640M1178 0L1218 160M1205 105L715 620",
      primary: "M0 20H20L60 14 120 15 165 8 180 0M450 0L440 20 475 105 570 160 572 280 585 370 500 510 470 540 440 555 385 640M880 140L895 190 880 220 878 310 820 445 817 535 795 550 793 640",
      trunk: "M660 0L690 10 720 45 765 62 805 98 860 124 935 210 975 262 1055 345 1080 375 1130 395 1222 392",
    },
  },
];

/* small land-use patches, spread evenly over the built-up country east of the hills */
const seeded = (seed: number) => () => {
  seed = (seed * 16807) % 2147483647;
  return seed / 2147483647;
};

const patches = (
  seed: number, count: number, x: number, y: number, w: number, h: number,
  min: number, max: number, lean = 0,
) => {
  const next = seeded(seed);
  let d = "";
  for (let i = 0; i < count; i++) {
    const v = next();
    const px = Math.round(x + next() * w + lean * v);
    const py = Math.round(y + v * h);
    const a = Math.round(min + next() * (max - min));
    const b = Math.round(min + next() * (max - min));
    const s = Math.round(a * 0.5);
    d += `M${px} ${py}l${a} ${s}l${-Math.round(b * 0.5)} ${b}l${-a} ${-s}z`;
  }
  return d;
};

const texture: [string, string][] = [
  ["#dadad9", patches(11, 170, 1690, 20, 600, 560, 14, 44)],
  ["#dadad9", patches(12, 90, 1720, 560, 400, 620, 10, 30, -200)],
  ["#dadad9", patches(19, 50, 1330, 80, 380, 500, 10, 26)],
  ["#efede6", patches(21, 70, 1760, 40, 480, 560, 8, 22)],
  ["#c9e4bd", patches(13, 90, 1700, 20, 700, 560, 8, 26)],
  ["#cbe4b9", patches(14, 100, 1800, 500, 560, 560, 8, 24, -160)],
  ["#bcd9b0", patches(15, 30, 1560, 30, 240, 220, 10, 30)],
  ["#c6ddb0", patches(16, 90, 2200, 20, 380, 640, 8, 34)],
  ["#e6f3cf", patches(17, 60, 1840, 540, 560, 540, 10, 26, -160)],
  ["#cdf7dd", patches(18, 80, 1680, 20, 720, 1000, 6, 20)],
  ["#bcd9b0", patches(20, 26, 3080, 330, 160, 260, 8, 22)],
];

const TileGroup = ({ tile, kinds }: { tile: Tile; kinds: Kind[] }) => (
  <g transform={`translate(${tile.x} ${tile.y})`}>
    {kinds.map((kind) => {
      const d = tile.paths[kind];
      if (!d) return null;
      const line = lines[kind];
      if (!line) return <path key={kind} d={d} fill={fills[kind]} />;
      return (
        <path
          key={kind} d={d} fill="none" stroke={line[0]} strokeWidth={line[1]}
          strokeLinejoin="round"
          strokeDasharray={kind === "bound" ? "28 5 6 5" : undefined}
        />
      );
    })}
  </g>
);

type Place = { x: number; y: number; text: string; size?: number; county?: boolean };

const places: Place[] = [
  { x: 183, y: 46, text: "Johnson City" },
  { x: 189, y: 68, text: "Blanco", county: true },
  { x: 189, y: 81, text: "County", county: true },
  { x: 174, y: 199, text: "Blanco" },
  { x: 428, y: 121, text: "Dripping Springs" },
  { x: 687, y: 52, text: "Austin", size: 14 },
  { x: 613, y: 216, text: "Buda" },
  { x: 586, y: 297, text: "Kyle" },
  { x: 538, y: 390, text: "San Marcos" },
  { x: 480, y: 246, text: "Hays County", county: true },
  { x: 419, y: 290, text: "Wimberley" },
  { x: 741, y: 390, text: "Lockhart" },
  { x: 777, y: 412, text: "Caldwell", county: true },
  { x: 1012, y: 191, text: "Bastrop" },
  { x: 1132, y: 283, text: "Smithville" },
  { x: 3, y: 342, text: "l", county: true },
  { x: 4, y: 354, text: "y", county: true },
];

const shields = [
  { x: 658, y: 96, w: 35, h: 18, rows: ["I 35"] },
  { x: 548, y: 122, w: 55, h: 18, rows: ["45 Toll"] },
  { x: 710, y: 163, w: 81, h: 31, rows: ["TX 45 Toll", "TX 130 Toll"] },
  { x: 688, y: 236, w: 82, h: 19, rows: ["TX 130 Toll"] },
];

const areas: Kind[] = order.slice(0, 7);
const ways: Kind[] = order.slice(7);

const fastRoute = "M1640 1152L1665 1158 1672 1150 1700 1150 1712 1146M1712 1146L1735 1120 1745 1090";
const safeRoute =
  "M2113 121L2122 118 2128 126 2118 165 2108 195 2110 225 2080 285 2050 340 2010 395 1985 440 1975 490 1950 565 1930 620 1905 670 1855 785 1820 840 1805 870 1795 930 1785 1000 1760 1060 1740 1105 1720 1135 1698 1158M1638 1153L1670 1162";

const RegionMap = () => (
  <MapDrawing viewBox="0 0 1238 416" preserveAspectRatio="xMidYMid slice" role="img" aria-label="Map of the route from San Marcos to Austin">
    <g transform="scale(0.33333) translate(-27 -18)">
      <path
        d="M1720 250L1800 200 1940 160 2030 18H2280L2230 190 2215 300 2150 380 2100 520 1960 620 1900 780 1830 790 1840 600 1790 470 1810 360Z"
        fill="#e1e1df"
      />
      {tiles.map((t) => <TileGroup key={`${t.x}-${t.y}`} tile={t} kinds={areas} />)}
      {texture.map(([fill, d], i) => <path key={i} d={d} fill={fill} fillOpacity="0.85" />)}
      <path d="M1575 545L1645 490 1645 465 1670 462 1690 440H1750V500H1705V515L1765 520 1760 545H1670L1672 615 1625 580Z" fill="#bcd9b0" />
      <path d="M1758 535H1672M1655 490V560L1625 575 1672 600V700L1680 740 1645 765 1600 745 1608 655 1670 640" fill="none" stroke="#9ccb9c" strokeWidth="9" />
      {tiles.map((t) => <TileGroup key={`${t.x}-${t.y}`} tile={t} kinds={ways} />)}
      <path d="M542 18V1266M1311 18V1266M2110 18V1266M2909 18V1266M3709 18V1266M27 488H3741" stroke="#000" strokeOpacity="0.04" strokeWidth="2" fill="none" />
      <path d="M2270 342l4 8v10l14 10v5l-14-4v9l5 5v3l-9-3-9 3v-3l5-5v-9l-14 4v-5l14-10v-10z" fill="#8461c4" />
      <circle cx="2265" cy="328" r="9" fill="none" stroke="#c4c4c7" strokeWidth="3" />
    </g>

    <text transform="translate(1139 194) rotate(90)" fontSize="8" fontWeight="700" fill="#bcd9b0">LUECKE</text>

    {shields.map((s, i) => (
      <g key={i} fontSize="10" textAnchor="middle" fill="#7d2a48">
        <rect x={s.x} y={s.y} width={s.w} height={s.h} rx="1" fill="#edccd2" stroke="#dfa6b2" />
        {s.rows.map((row, r) => (
          <text key={row} x={s.x + s.w / 2} y={s.y + 13 + r * 12} stroke="#7d2a48" strokeWidth="0.2">{row}</text>
        ))}
      </g>
    ))}

    {places.map((p) => (
      <text
        key={p.text + p.x} x={p.x} y={p.y} textAnchor="middle"
        fontSize={p.size ?? 10}
        fontStyle={p.county ? "italic" : "normal"}
        fill={p.county ? "#a983b0" : "#333"}
        stroke="#fff" strokeOpacity="0.6" strokeWidth="2" paintOrder="stroke"
      >
        {p.text}
      </text>
    ))}

    <g transform="scale(0.33333) translate(-27 -18)" fill="none" strokeLinecap="round" strokeLinejoin="round">
      <path d={fastRoute} stroke="#3c50ee" strokeOpacity="0.7" strokeWidth="15" />
      <path d="M1670 1166L1695 1166" stroke="#4f9a30" strokeWidth="14" />
      <path d={safeRoute} stroke="#1c6e64" strokeOpacity="0.88" strokeWidth="16" />
    </g>
  </MapDrawing>
);

const SelectField = ({ id, label, options }: { id: string; label: string; options: string[] }) => (
  <Field>
    <Label htmlFor={id}>{label}</Label>
    <SelectBox>
      <Select id={id}>
        {options.map((o) => <option key={o}>{o}</option>)}
      </Select>
      <Caret width="10" height="6" viewBox="0 0 10 6" aria-hidden="true">
        <path d="M0 0H10L5 5.5Z" fill="#333" />
      </Caret>
    </SelectBox>
  </Field>
);

const TextField = ({ id, label, value }: { id: string; label: string; value: string }) => (
  <Field>
    <Label htmlFor={id}>{label}</Label>
    <TextInput id={id} type="text" defaultValue={value} />
  </Field>
);

const scores = [
  ["Crash Score", "6.85", "5.82"],
  ["Avg. Crash Score", "0.07", "0.06"],
  ["High Crash Score", "0.45", "0.27"],
  ["Road ID of High Score", "31623", "11407"],
  ["Sum of Precipitation", "0", "0"],
  ["Distance (miles)", "33.14", "32.61"],
  ["Duration (minutes)", "41.6", "43"],
];

const App = () => (
  <>
    <GlobalStyle />
    <Page>
      <Banner>
        <Title>AI-Driven Safe Navigation Tool</Title>
      </Banner>
      <Tabs>
        <Tab href="#consumer" $active>Consumer Mapping</Tab>
        <Tab href="#analyst">Analyst Mapping</Tab>
        <Tab href="#statistics">Statistical Analysis</Tab>
        <Tab href="#utc">UTC Project</Tab>
      </Tabs>
      <Columns>
        <Column>
          <Well onSubmit={(e) => e.preventDefault()}>
            <SelectField id="scope" label="Temporal Scope" options={["Annual", "Monthly", "Daily"]} />
            <SelectField id="annual" label="Annual" options={["All Years"]} />
            <TextField id="from" label="From" value="Texas State University" />
            <TextField id="to" label="To" value="University of Texas" />
            <DirectionsButton type="submit">Directions</DirectionsButton>
          </Well>
        </Column>
        <Column>
          <MapFrame>
            <RegionMap />
            <ZoomBar>
              <ZoomButton type="button" aria-label="Zoom in">
                <svg width="14" height="14" viewBox="0 0 14 14"><path d="M7 1V13M1 7H13" stroke="#000" strokeWidth="2.4" /></svg>
              </ZoomButton>
              <ZoomButton type="button" aria-label="Zoom out">
                <svg width="14" height="14" viewBox="0 0 14 14"><path d="M1 7H13" stroke="#000" strokeWidth="2.4" /></svg>
              </ZoomButton>
            </ZoomBar>
            <Attribution>
              <a href="#leaflet">Leaflet</a> | © <a href="#osm">OpenStreetMap</a> contributors, <a href="#license">CC-BY-SA</a>
            </Attribution>
          </MapFrame>
          <ScoreTable>
            <thead>
              <tr>
                <td />
                <th scope="col">Fast Route</th>
                <th scope="col">Safe Route</th>
              </tr>
            </thead>
            <tbody>
              {scores.map(([name, fast, safe]) => (
                <tr key={name}>
                  <th scope="row">{name}</th>
                  <td>{fast}</td>
                  <td>{safe}</td>
                </tr>
              ))}
            </tbody>
          </ScoreTable>
        </Column>
      </Columns>
      <Footer>© 2023 by Dr. Subasish Das and David Mills.</Footer>
    </Page>
  </>
);

export default App;
